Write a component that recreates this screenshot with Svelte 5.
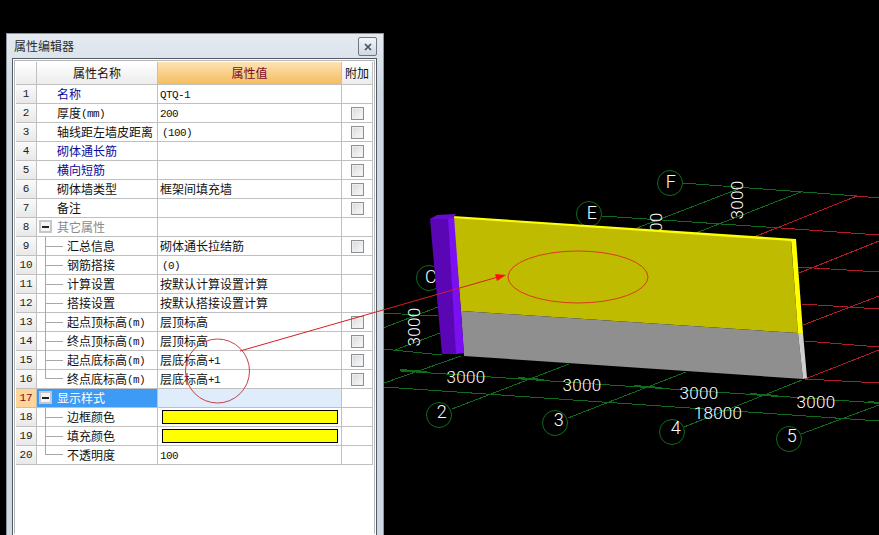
<script>
  const rows = [
    { n: 1, name: '名称', kind: 'link', value: 'QTQ-1' },
    { n: 2, name: '厚度(mm)', value: '200', check: true },
    { n: 3, name: '轴线距左墙皮距离', value: '(100)', indent: true, check: true },
    { n: 4, name: '砌体通长筋', kind: 'link', check: true },
    { n: 5, name: '横向短筋', kind: 'link', check: true },
    { n: 6, name: '砌体墙类型', value: '框架间填充墙', check: true },
    { n: 7, name: '备注', check: true },
    { n: 8, name: '其它属性', kind: 'group' },
    { n: 9, name: '汇总信息', tree: 'mid', value: '砌体通长拉结筋', check: true },
    { n: 10, name: '钢筋搭接', tree: 'mid', value: '(0)', indent: true },
    { n: 11, name: '计算设置', tree: 'mid', value: '按默认计算设置计算' },
    { n: 12, name: '搭接设置', tree: 'mid', value: '按默认搭接设置计算' },
    { n: 13, name: '起点顶标高(m)', tree: 'mid', value: '层顶标高', check: true },
    { n: 14, name: '终点顶标高(m)', tree: 'mid', value: '层顶标高', check: true },
    { n: 15, name: '起点底标高(m)', tree: 'mid', value: '层底标高+1', check: true },
    { n: 16, name: '终点底标高(m)', tree: 'last', value: '层底标高+1', check: true },
    { n: 17, name: '显示样式', kind: 'selected' },
    { n: 18, name: '边框颜色', tree: 'mid', swatch: true },
    { n: 19, name: '填充颜色', tree: 'mid', swatch: true },
    { n: 20, name: '不透明度', tree: 'last', value: '100' },
  ];

  // latin runs are set smaller in a mono face, like the bitmap font of the original
  function parts(text) {
    return (text ?? '').split(/([\x20-\x7e]+)/).filter(Boolean);
  }
  const isLatin = (s) => /^[\x20-\x7e]+$/.test(s);

  const green = [
    [401, 371, 879, 403], [384, 387, 879, 421],
    [452, 409, 569, 364], [568, 418, 686, 372], [684, 427, 802, 380], [801, 434, 879, 405],
    [384, 383, 461, 356], [383, 349, 442, 355], [395, 350, 440, 333], [383, 328, 438, 307],
    [383, 313, 438, 316],
    [602, 216, 781, 228], [682, 183, 857, 196], [637, 228, 741, 188], [696, 233, 801, 192],
  ];
  const ticks = [
    [400, 370, 427, 372], [518, 378, 544, 380], [634, 386, 662, 388], [750, 394, 778, 396],
    [868, 402, 879, 403],
  ];
  const red = [
    [781, 228, 879, 235], [857, 196, 879, 198], [754, 237, 857, 196],
    [798, 267, 879, 272], [799, 273, 879, 241], [802, 304, 879, 309], [803, 325, 879, 296],
    [805, 341, 879, 347], [805, 379, 879, 350], [805, 379, 879, 383],
  ];
  const bubbles = [
    { x: 670, y: 183, t: 'F', tx: 671, ty: 188 },
    { x: 589, y: 214, t: 'E', tx: 592, ty: 219 },
    { x: 429, y: 278, t: 'C', tx: 431, ty: 283 },
    { x: 439, y: 415, t: '2', tx: 442, ty: 418 },
    { x: 555, y: 423, t: '3', tx: 559, ty: 426 },
    { x: 672, y: 432, t: '4', tx: 676, ty: 434 },
    { x: 789, y: 439, t: '5', tx: 792, ty: 442 },
  ];
  const dims = [
    { x: 466, y: 383, t: '3000' }, { x: 582, y: 391, t: '3000' },
    { x: 699, y: 399, t: '3000' }, { x: 816, y: 408, t: '3000' },
    { x: 718, y: 419, t: '18000' },
  ];
  const upright = [
    { x: 743, y: 200 }, { x: 662, y: 232 }, { x: 420, y: 327 },
  ];
</script>

<div class="page">
  <section class="window">
    <header class="titlebar">
      <span class="title">属性编辑器</span>
      <button type="button" class="close" aria-label="关闭">
        <svg width="8" height="8" viewBox="0 0 8 8"><path d="M1 1l6 6M7 1l-6 6" stroke="#4a505a" stroke-width="1.7" fill="none" /></svg>
      </button>
    </header>
    <div class="frame">
      <div class="inner">
        <div class="grid">
          <div class="row head">
            <div class="cell num"></div>
            <div class="cell hname">属性名称</div>
            <div class="cell hvalue">属性值</div>
            <div class="cell hextra">附加</div>
          </div>
          {#each rows as r (r.n)}
            <div class="row" class:sel={r.kind === 'selected'}>
              <div class="cell num">{r.n}</div>
              <div class="cell name {r.kind ?? ''}" class:child={r.tree}>
                {#if r.kind === 'group' || r.kind === 'selected'}
                  <span class="expander"><i></i></span>
                {/if}
                {#if r.tree}
                  <span class="tree {r.tree}"></span>
                {/if}
                <span class="text">{#each parts(r.name) as p}{#if isLatin(p)}<span class="latin">{p}</span>{:else}{p}{/if}{/each}</span>
              </div>
              <div class="cell value">
                {#if r.swatch}
                  <span class="swatch"></span>
                {:else}
                  <span class="text" class:indent={r.indent}>{#each parts(r.value) as p}{#if isLatin(p)}<span class="latin">{p}</span>{:else}{p}{/if}{/each}</span>
                {/if}
              </div>
              <div class="cell extra">
                {#if r.check}<span class="check"></span>{/if}
              </div>
            </div>
          {/each}
        </div>
      </div>
    </div>
  </section>

  <svg class="scene" width="495" height="535" viewBox="384 0 495 535">
    <g stroke="#116b1c" fill="none" shape-rendering="crispEdges">
      {#each green as l}<line x1={l[0]} y1={l[1]} x2={l[2]} y2={l[3]} />{/each}
      {#each ticks as l}<line x1={l[0]} y1={l[1]} x2={l[2]} y2={l[3]} stroke-width="2" />{/each}
    </g>
    <g stroke="#116b1c" fill="none">
      {#each bubbles as b}<circle cx={b.x} cy={b.y} r="12.5" />{/each}
    </g>
    <g stroke="#b01c28" fill="none" shape-rendering="crispEdges">
      {#each red as l}<line x1={l[0]} y1={l[1]} x2={l[2]} y2={l[3]} />{/each}
    </g>
    <g class="cad">
      {#each bubbles as b}<text x={b.tx} y={b.ty} text-anchor="middle" class="big">{b.t}</text>{/each}
      {#each upright as u}
        <text x={u.x} y={u.y} text-anchor="middle" transform="rotate(-90 {u.x} {u.y})">3000</text>
      {/each}
    </g>

    <!-- wall -->
    <polygon points="453,216 796,239 791,242 453,219" fill="#ffff00" />
    <polygon points="453,218 791,241 798,333 461,311" fill="#bfbb00" />
    <polygon points="791,239 796,239 803,333 798,333" fill="#ffff00" />
    <polygon points="461,311 798,333 803,379 464,356" fill="#8f8f8f" />
    <polygon points="798,333 803,333 807,378 803,379" fill="#cfcfcf" />
    <polygon points="430,219 449,219 457,354 442,354" fill="#5a06b4" />
    <polygon points="448,218 454,216 464,353 456,354" fill="#7a10f2" />
    <polygon points="430,219 437,215 456,214 454,217 448,219" fill="#6a0cd0" />

    <g class="cad">
      {#each dims as d}<text x={d.x} y={d.y} text-anchor="middle">{d.t}</text>{/each}
    </g>
  </svg>

  <svg class="marks" width="879" height="535" viewBox="0 0 879 535">
    <ellipse cx="578" cy="277" rx="70" ry="26" fill="none" stroke="#d83a20" />
    <circle cx="217.5" cy="371" r="32" fill="none" stroke="#c8404c" />
    <line x1="240" y1="351" x2="498" y2="277" stroke="#d81c24" />
    <polygon points="506,275 495,274 497,281" fill="#ff1010" />
  </svg>
</div>

<style>
  :global(body) {
    margin: 0;
    background: #000;
  }

  .page {
    position: relative;
    display: flex;
    align-items: flex-start;
    width: 879px;
    height: 535px;
    overflow: hidden;
    background: #000;
    font-family: "Noto Sans CJK SC", "Liberation Sans", sans-serif;
    font-size: 12px;
    color: #111;
  }

  .window {
    box-sizing: border-box;
    flex: none;
    display: flex;
    flex-direction: column;
    width: 378px;
    height: 502px;
    margin: 33px 0 0 6px;
    border: 1px solid #8d959e;
    border-bottom: none;
    background: linear-gradient(#e4eaf0, #cfd9e4 60px, #cfd9e4);
  }

  .titlebar {
    flex: none;
    display: flex;
    align-items: center;
    justify-content: space-between;
    height: 24px;
    padding: 0 6px 0 7px;
  }

  .title {
    color: #2c2c2c;
    line-height: 24px;
  }

  .close {
    display: flex;
    align-items: center;
    justify-content: center;
    width: 19px;
    height: 19px;
    margin-top: 1px;
    padding: 0;
    border: 1px solid #6d7681;
    border-radius: 2px;
    background: linear-gradient(#f2f5f8, #cfd8e1);
  }

  .frame {
    flex: 1;
    box-sizing: border-box;
    margin: 0 6px 0 5px;
    padding: 1px;
    border: 1px solid #555a60;
    border-bottom: none;
    background: #fff;
  }

  .inner {
    box-sizing: border-box;
    height: 100%;
    padding: 1px;
    border: 1px solid #b4b8bc;
    border-bottom: none;
    background: #fff;
  }

  .row {
    display: grid;
    grid-template-columns: 21px 121px 184px 31px;
    grid-template-rows: minmax(0, 1fr);
    height: 19px;
  }

  .row.head {
    height: 23px;
  }

  .cell {
    position: relative;
    box-sizing: border-box;
    display: flex;
    align-items: center;
    min-height: 0;
    border-right: 1px solid #c0c0c0;
    border-bottom: 1px solid #c0c0c0;
    white-space: nowrap;
    line-height: 18px;
  }

  .text {
    display: block;
    height: 18px;
    line-height: 18px;
  }

  .text.indent {
    padding-left: 2px;
  }

  .num {
    justify-content: center;
    background: linear-gradient(#fafafa, #e8e8e8);
    font-family: "Liberation Mono", monospace;
    font-size: 11px;
    color: #222;
  }

  .head .num,
  .hname,
  .hextra {
    justify-content: center;
    background: linear-gradient(#fff, #ececec);
  }

  .hvalue {
    justify-content: center;
    background: linear-gradient(#fde3b4, #f5bd5e);
    color: #7a0a2a;
  }

  .name {
    padding-left: 20px;
  }

  .name.child {
    padding-left: 30px;
  }

  .name.link {
    color: #0a0a9c;
  }

  .name.group {
    color: #8a8a8a;
  }

  .name.selected {
    background: #3d9bf5;
    color: #fff;
  }

  .value {
    padding-left: 2px;
  }

  .sel .num {
    background: #fdd69a;
    color: #7a0a2a;
  }

  .sel .value {
    background: #deecfb;
  }

  .latin {
    position: relative;
    top: -1px;
    font-family: "Liberation Mono", monospace;
    font-size: 11px;
    letter-spacing: -0.6px;
    line-height: 1;
    white-space: pre;
  }

  .expander {
    position: absolute;
    z-index: 1;
    top: 2px;
    left: 2px;
    box-sizing: border-box;
    display: flex;
    align-items: center;
    justify-content: center;
    width: 13px;
    height: 13px;
    border: 2px solid #c4c8cc;
    background: #f4f4f4;
  }

  .expander i {
    display: block;
    width: 7px;
    height: 2px;
    background: #222;
  }

  .tree {
    position: absolute;
    top: 0;
    bottom: -1px;
    left: 8px;
    width: 17px;
    border-left: 1px solid #a8a8a8;
  }

  .tree.last {
    bottom: 50%;
  }

  .tree::after {
    content: "";
    position: absolute;
    left: 0;
    top: 9px;
    width: 17px;
    border-top: 1px solid #a8a8a8;
  }

  .tree.last::after {
    top: auto;
    bottom: 0;
  }

  .swatch {
    box-sizing: border-box;
    display: block;
    width: 176px;
    height: 14px;
    margin-left: 2px;
    border: 1px solid #000;
    background: #ff0;
  }

  .extra {
    justify-content: center;
  }

  .check {
    box-sizing: border-box;
    display: block;
    width: 13px;
    height: 13px;
    border: 1px solid #8c9196;
    background: linear-gradient(135deg, #d8d8d8, #fbfbfb);
    box-shadow: inset 0 0 0 1px #eee;
  }

  .scene {
    flex: none;
    display: block;
  }

  .cad text {
    fill: #fff;
    font-family: Roboto, "Liberation Sans", sans-serif;
    font-weight: 300;
    font-size: 17px;
    letter-spacing: 0.3px;
  }

  .cad text.big {
    font-size: 18px;
  }

  .marks {
    position: absolute;
    top: 0;
    left: 0;
    pointer-events: none;
  }
</style>
